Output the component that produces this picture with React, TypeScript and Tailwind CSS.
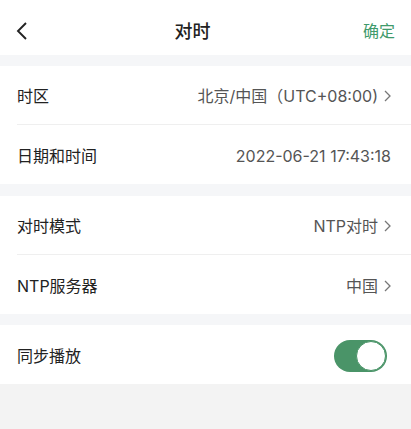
import { useState } from "react";

const FONT = "font-['Inter','Noto_Sans_CJK_SC',sans-serif]";

function Chevron() {
  return (
    <svg width="7" height="12" viewBox="0 0 7 12" className="ml-[6px] shrink-0">
      <path d="M1 1 L6 6 L1 11" fill="none" stroke="#777" strokeWidth="1.3" />
    </svg>
  );
}

interface RowProps {
  label: string;
  value?: string;
  arrow?: boolean;
  last?: boolean;
  children?: React.ReactNode;
}

function Row({ label, value, arrow, last, children }: RowProps) {
  return (
    <div className="pl-[17px] bg-white">
      <div className={`flex items-center justify-between h-[59px] pr-[20px] pt-[2px] ${last ? "" : "border-b border-[#efefef]"}`}>
        <span className="text-[16px] text-[#222]">{label}</span>
        {children ?? (
          <div className="flex items-center text-[16px] text-[#555]">
            <span>{value}</span>
            {arrow && <Chevron />}
          </div>
        )}
      </div>
    </div>
  );
}

function Toggle() {
  const [on, setOn] = useState(true);
  return (
    <button
      onClick={() => setOn(!on)}
      className={`relative w-[53px] h-[32px] rounded-full ${on ? "bg-[#4a9468]" : "bg-[#ddd]"} mr-[4px]`}
    >
      <span
        className={`absolute top-[1px] ${on ? "right-[1px]" : "left-[1px]"} w-[30px] h-[30px] rounded-full bg-white border border-[#4a9468]`}
      />
    </button>
  );
}

export default function App() {
  return (
    <div className={`w-full h-[429px] bg-[#f3f3f3] ${FONT}`}>
      <div className="flex items-center justify-between h-[55px] bg-white pl-[15px] pr-[16px] pt-[7px]">
        <svg width="13" height="18" viewBox="0 0 13 18">
          <path d="M11 1 L3 9 L11 17" fill="none" stroke="#222" strokeWidth="1.9" />
        </svg>
        <span className="text-[18px] font-medium text-[#222] -ml-[6px]">对时</span>
        <span className="text-[16px] text-[#3f9a6b]">确定</span>
      </div>
      <div className="h-[11px] bg-[#f5f6f8]" />
      <Row label="时区" value="北京/中国（UTC+08:00)" arrow />
      <Row label="日期和时间" value="2022-06-21 17:43:18" last />
      <div className="h-[12px] bg-[#f5f6f8]" />
      <Row label="对时模式" value="NTP对时" arrow />
      <Row label="NTP服务器" value="中国" arrow last />
      <div className="h-[11px] bg-[#f5f6f8]" />
      <Row label="同步播放" last>
        <Toggle />
      </Row>
    </div>
  );
}
